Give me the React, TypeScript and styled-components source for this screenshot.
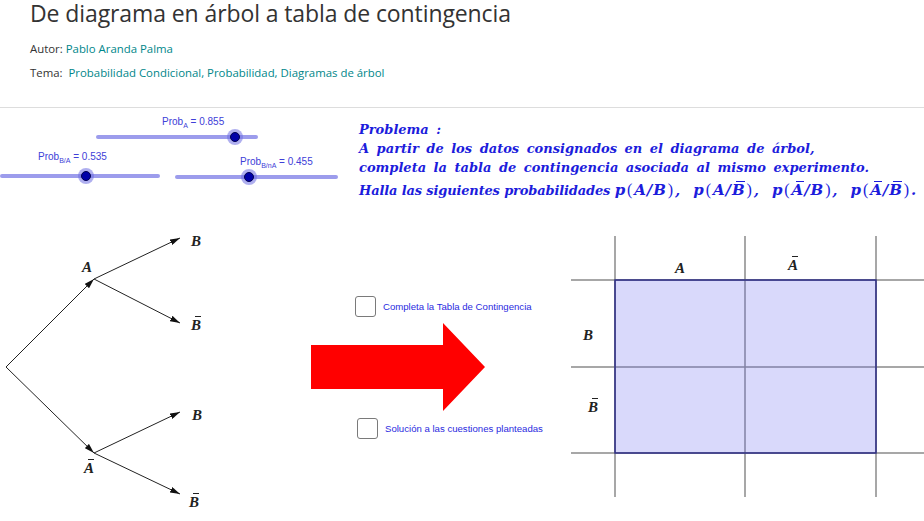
import React from "react";
import styled, { createGlobalStyle } from "styled-components";

const GlobalStyle = createGlobalStyle`
  html, body {
    margin: 0;
    padding: 0;
    background: #ffffff;
  }
  body {
    font-family: "Open Sans", "Liberation Sans", sans-serif;
    width: 924px;
    height: 521px;
    overflow: hidden;
  }
`;

const Page = styled.div`
  width: 924px;
  height: 521px;
  display: flex;
  flex-direction: column;
`;

const Header = styled.header`
  padding-left: 30px;
  padding-bottom: 22px;
  border-bottom: 1px solid #dddddd;
`;

const Title = styled.h1`
  margin: 0;
  font-size: 23px;
  line-height: 26px;
  letter-spacing: -0.1px;
  font-weight: 400;
  color: #333333;
`;

const Meta = styled.div`
  margin-top: 11px;
  font-size: 11.4px;
  line-height: 24px;
`;

const MetaLine = styled.div`
  color: #333333;
  span {
    color: #00868a;
  }
`;

/* the applet is a free canvas: its parts sit where the construction put them */
const Applet = styled.div`
  position: relative;
  flex: 1;
  overflow: hidden;
`;

const SliderWrap = styled.div<{ $x: number; $y: number; $w: number }>`
  position: absolute;
  left: ${(p) => p.$x}px;
  top: ${(p) => p.$y}px;
  width: ${(p) => p.$w}px;
  height: 0;
`;

const Track = styled.div`
  position: absolute;
  left: 0;
  right: 0;
  top: -2px;
  height: 4px;
  border-radius: 2px;
  background: #9c9cec;
`;

const Thumb = styled.div`
  position: absolute;
  top: -5px;
  width: 10px;
  height: 10px;
  margin-left: -5px;
  border-radius: 50%;
  background: #0000a8;
  border: 1px solid #000050;
  box-sizing: border-box;
  box-shadow: 0 0 0 3px rgba(110, 110, 225, 0.55);
`;

const SliderLabel = styled.div<{ $dx: number; $dy: number }>`
  position: absolute;
  left: ${(p) => p.$dx}px;
  top: ${(p) => p.$dy - 7}px;
  white-space: nowrap;
  font-family: "Liberation Sans", Arial, sans-serif;
  font-size: 10px;
  line-height: 14px;
  color: #4040d8;

  sub {
    font-size: 7px;
    vertical-align: -3px;
  }
`;

type SliderProps = {
  x: number;
  y: number;
  w: number;
  value: number;
  dx: number;
  dy: number;
  name: string;
  sub: string;
};

function Slider({ x, y, w, value, dx, dy, name, sub }: SliderProps) {
  return (
    <SliderWrap $x={x} $y={y} $w={w}>
      <Track />
      <Thumb style={{ left: `${value * 100}%` }} />
      <SliderLabel $dx={dx} $dy={dy}>
        {name}
        <sub>{sub}</sub> = {value.toFixed(3)}
      </SliderLabel>
    </SliderWrap>
  );
}

const Problem = styled.div`
  position: absolute;
  left: 359px;
  top: 12px;
  font-family: "DejaVu Serif", "Liberation Serif", serif;
  font-style: italic;
  font-weight: 700;
  font-size: 13px;
  line-height: 19px;
  color: #1c1cdc;
  white-space: nowrap;
`;

const ProblemLine = styled.div<{ $tight?: boolean }>`
  margin-top: ${(p) => (p.$tight ? 3 : 0)}px;
  word-spacing: ${(p) => (p.$tight ? 0 : 3)}px;
  letter-spacing: ${(p) => (p.$tight ? -0.15 : 0)}px;
`;

const Formula = styled.span`
  font-size: 15px;
  letter-spacing: 0.9px;
  word-spacing: 6px;
`;

const Paren = styled.span`
  font-style: normal;
  font-weight: 400;
  font-family: "Liberation Serif", serif;
  font-size: 16px;
  padding: 0 1px;
`;

const Bar = styled.span`
  position: relative;
  display: inline-block;

  &::before {
    content: "";
    position: absolute;
    left: 0.28em;
    right: 0.02em;
    top: 0.02em;
    border-top: 1px solid currentColor;
  }
`;

const Canvas = styled.div<{ $x: number; $y: number; $w: number; $h: number }>`
  position: absolute;
  left: ${(p) => p.$x}px;
  top: ${(p) => p.$y}px;
  width: ${(p) => p.$w}px;
  height: ${(p) => p.$h}px;

  svg {
    position: absolute;
    left: 0;
    top: 0;
  }
`;

const MathLabel = styled.span<{ $x: number; $y: number }>`
  position: absolute;
  left: ${(p) => p.$x}px;
  top: ${(p) => p.$y}px;
  transform: translate(-50%, -50%);
  font-family: "Liberation Serif", "DejaVu Serif", serif;
  font-style: italic;
  font-weight: 700;
  font-size: 15px;
  line-height: 18px;
  color: #222222;
`;

const CheckRow = styled.label<{ $x: number; $y: number }>`
  position: absolute;
  left: ${(p) => p.$x}px;
  top: ${(p) => p.$y}px;
  display: flex;
  align-items: center;
  gap: 7px;
  cursor: pointer;
`;

const Box = styled.span`
  width: 21px;
  height: 21px;
  box-sizing: border-box;
  border: 1.5px solid #7a7a7a;
  border-radius: 3px;
  background: #ffffff;
`;

const CheckText = styled.span`
  font-family: "Liberation Sans", Arial, sans-serif;
  font-size: 9.6px;
  color: #2a2ae0;
  white-space: nowrap;
`;

type Node = [number, number];

const treeEdges: [Node, Node][] = [
  [[6, 142], [94, 54]],
  [[6, 142], [94, 228]],
  [[94, 54], [180, 13]],
  [[94, 54], [180, 98]],
  [[94, 228], [180, 187]],
  [[94, 228], [180, 269]],
];

function TreeDiagram() {
  return (
    <Canvas $x={0} $y={117} $w={230} $h={296}>
      <svg width="230" height="296" viewBox="0 0 230 296">
        <defs>
          <marker
            id="head"
            viewBox="0 0 10 6"
            refX="10"
            refY="3"
            markerWidth="10"
            markerHeight="6"
            markerUnits="userSpaceOnUse"
            orient="auto"
          >
            <path d="M0 0 L10 3 L0 6 Z" fill="#111" />
          </marker>
        </defs>
        {treeEdges.map(([a, b], i) => (
          <line
            key={i}
            x1={a[0]}
            y1={a[1]}
            x2={b[0]}
            y2={b[1]}
            stroke="#222"
            strokeWidth="1"
            markerEnd="url(#head)"
          />
        ))}
      </svg>
      <MathLabel $x={87} $y={42}>A</MathLabel>
      <MathLabel $x={196} $y={16}>B</MathLabel>
      <MathLabel $x={196} $y={100}>
        <Bar>B</Bar>
      </MathLabel>
      <MathLabel $x={89} $y={243}>
        <Bar>A</Bar>
      </MathLabel>
      <MathLabel $x={197} $y={190}>B</MathLabel>
      <MathLabel $x={194} $y={277}>
        <Bar>B</Bar>
      </MathLabel>
    </Canvas>
  );
}

function BigArrow() {
  return (
    <Canvas $x={305} $y={210} $w={185} $h={95}>
      <svg width="185" height="95" viewBox="0 0 185 95">
        <polygon
          points="6,27 138,27 138,5 180,49 138,93 138,71 6,71"
          fill="#ff0000"
        />
      </svg>
    </Canvas>
  );
}

const cols = [55, 185, 316];
const rows = [50, 137, 223];

function ContingencyTable() {
  return (
    <Canvas $x={560} $y={122} $w={364} $h={290}>
      <svg width="364" height="290" viewBox="0 0 364 290">
        {cols.map((x) => (
          <line key={`c${x}`} x1={x} y1={6} x2={x} y2={267} stroke="#8a8a8a" strokeWidth="1.5" />
        ))}
        {rows.map((y) => (
          <line key={`r${y}`} x1={11} y1={y} x2={364} y2={y} stroke="#8a8a8a" strokeWidth="1.5" />
        ))}
        <rect
          x={55}
          y={50}
          width={261}
          height={173}
          fill="rgba(110, 110, 240, 0.26)"
          stroke="#2e2e85"
          strokeWidth="1.5"
        />
      </svg>
      <MathLabel $x={120} $y={38}>A</MathLabel>
      <MathLabel $x={233} $y={35}>
        <Bar>A</Bar>
      </MathLabel>
      <MathLabel $x={28} $y={105}>B</MathLabel>
      <MathLabel $x={33} $y={177}>
        <Bar>B</Bar>
      </MathLabel>
    </Canvas>
  );
}

function Prob({ a, b }: { a: React.ReactNode; b: React.ReactNode }) {
  return (
    <>
      p<Paren>(</Paren>
      {a}/{b}
      <Paren>)</Paren>
    </>
  );
}

export default function App() {
  return (
    <Page>
      <GlobalStyle />
      <Header>
        <Title>De diagrama en árbol a tabla de contingencia</Title>
        <Meta>
          <MetaLine>
            Autor: <span>Pablo Aranda Palma</span>
          </MetaLine>
          <MetaLine>
            Tema:&nbsp; <span>Probabilidad Condicional, Probabilidad, Diagramas de árbol</span>
          </MetaLine>
        </Meta>
      </Header>
      <Applet>
        <Slider x={96} y={29} w={162} value={0.855} dx={66} dy={-15} name="Prob" sub="A" />
        <Slider x={0} y={68} w={160} value={0.535} dx={38} dy={-19} name="Prob" sub="B/A" />
        <Slider x={175} y={69} w={163} value={0.455} dx={65} dy={-15} name="Prob" sub="B/nA" />

        <Problem>
          <ProblemLine>Problema :</ProblemLine>
          <ProblemLine>A partir de los datos consignados en el diagrama de árbol,</ProblemLine>
          <ProblemLine>completa la tabla de contingencia asociada al mismo experimento.</ProblemLine>
          <ProblemLine $tight>
            Halla las siguientes probabilidades{" "}
            <Formula>
              <Prob a="A" b="B" />, <Prob a="A" b={<Bar>B</Bar>} />, <Prob a={<Bar>A</Bar>} b="B" />,{" "}
              <Prob a={<Bar>A</Bar>} b={<Bar>B</Bar>} />.
            </Formula>
          </ProblemLine>
        </Problem>

        <TreeDiagram />

        <CheckRow $x={355} $y={188}>
          <Box />
          <CheckText>Completa la Tabla de Contingencia</CheckText>
        </CheckRow>
        <CheckRow $x={357} $y={310}>
          <Box />
          <CheckText>Solución a las cuestiones planteadas</CheckText>
        </CheckRow>

        <BigArrow />
        <ContingencyTable />
      </Applet>
    </Page>
  );
}
